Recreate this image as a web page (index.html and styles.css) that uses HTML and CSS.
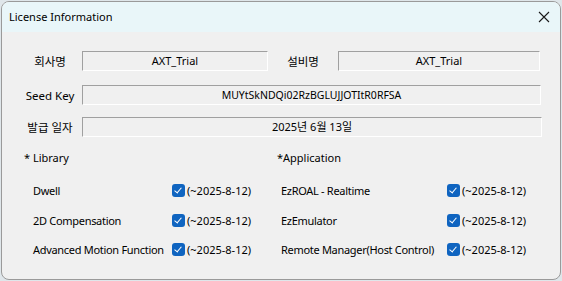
FILE: index.html
```html
<!DOCTYPE html>
<html lang="ko">
<head>
    <meta charset="UTF-8">
    <meta name="viewport" content="width=device-width, initial-scale=1.0">
    <title>License Information</title>
    <link rel="stylesheet" href="styles.css">
</head>
<body>

    <div class="window">
        <div class="titlebar">
            <span class="title">License Information</span>
            <span class="close">
                <svg width="12" height="12" viewBox="0 0 12 12">
                    <path d="M1 1 L11 11 M11 1 L1 11" stroke="#1a1a1a" stroke-width="1.1" fill="none"/>
                </svg>
            </span>
        </div>

        <div class="content">
            <!-- 기본 정보 -->
            <div class="form-row first">
                <div class="label">회사명</div>
                <div class="field short">AXT_Trial</div>
                <div class="label second">설비명</div>
                <div class="field">AXT_Trial</div>
            </div>
            <div class="form-row seed">
                <div class="label">Seed Key</div>
                <div class="field key">MUYtSkNDQi02RzBGLUJJOTItR0RFSA</div>
            </div>
            <div class="form-row date">
                <div class="label">발급 일자</div>
                <div class="field wide">2025년 6월 13일</div>
            </div>

            <!-- 라이선스 목록 -->
            <div class="license-grid">
                <div class="group">
                    <div class="group-title">* Library</div>
                    <div class="item lib"><span class="name">Dwell</span><span class="check"></span><span>(~2025-8-12)</span></div>
                    <div class="item lib"><span class="name">2D Compensation</span><span class="check"></span><span>(~2025-8-12)</span></div>
                    <div class="item lib"><span class="name">Advanced Motion Function</span><span class="check"></span><span>(~2025-8-12)</span></div>
                </div>
                <div class="group">
                    <div class="group-title">*Application</div>
                    <div class="item app"><span class="name">EzROAL - Realtime</span><span class="check"></span><span>(~2025-8-12)</span></div>
                    <div class="item app"><span class="name">EzEmulator</span><span class="check"></span><span>(~2025-8-12)</span></div>
                    <div class="item app"><span class="name">Remote Manager(Host Control)</span><span class="check"></span><span>(~2025-8-12)</span></div>
                </div>
            </div>
        </div>
    </div>

</body>
</html>
```

FILE: styles.css
```css
body {
    font-family: "Noto Sans", "Noto Sans CJK KR", sans-serif;
    font-size: 11px;
    color: #000;
    background-color: #dfe6ea;
    margin: 0;
    padding: 1px 0 0 1px;
}

.window {
    width: 558px;
    height: 277px;
    background-color: #f0f0f0;
    border: 1px solid #9a9a9a;
    border-radius: 8px;
    overflow: hidden;
}

.titlebar {
    height: 30px;
    background-color: #e9f6f9;
    display: flex;
    align-items: center;
    justify-content: space-between;
    padding: 0 6px 0 7px;
}

.title {
    font-size: 11px;
    margin-top: -1px;
}

.close {
    display: flex;
    width: 20px;
    justify-content: center;
}

.content {
    padding: 19px 0 0 0;
}

.form-row {
    display: flex;
    align-items: center;
    height: 20px;
}

.form-row.seed {
    margin-top: 14px;
}

.form-row.date {
    margin-top: 12px;
}

.label {
    width: 64px;
    margin-left: 16px;
    text-align: center;
    font-size: 11.5px;
}

.label.second {
    width: 70px;
    margin-left: 0;
}

.field {
    box-sizing: border-box;
    height: 20px;
    border-top: 1px solid #a0a0a0;
    border-left: 1px solid #a0a0a0;
    border-right: 1px solid #fff;
    border-bottom: 1px solid #fff;
    text-align: center;
    line-height: 18px;
    width: 202px;
}

.field.short {
    width: 186px;
}

.field.key {
    width: 459px;
    font-size: 10.5px;
}

.field.wide {
    width: 460px;
}

.license-grid {
    display: grid;
    grid-template-columns: 253px 1fr;
    padding: 12px 0 0 22px;
}

.group-title {
    height: 18px;
    line-height: 18px;
}

.item {
    display: flex;
    align-items: center;
    height: 29.5px;
    white-space: nowrap;
}

.group .item:nth-child(2) {
    margin-top: 9px;
}

.item.lib {
    padding-left: 9px;
}

.item.app {
    padding-left: 4px;
}

.item .name {
    display: inline-block;
    letter-spacing: -0.3px;
}

.item.lib .name {
    width: 139px;
}

.item.app .name {
    width: 166px;
}

.check {
    width: 13px;
    height: 13px;
    border-radius: 3px;
    background-color: #0f64c0;
    margin-right: 2px;
    position: relative;
}

.check::after {
    content: "";
    position: absolute;
    left: 4px;
    top: 2px;
    width: 3px;
    height: 6px;
    border-right: 1.3px solid #fff;
    border-bottom: 1.3px solid #fff;
    transform: rotate(40deg);
}
```
